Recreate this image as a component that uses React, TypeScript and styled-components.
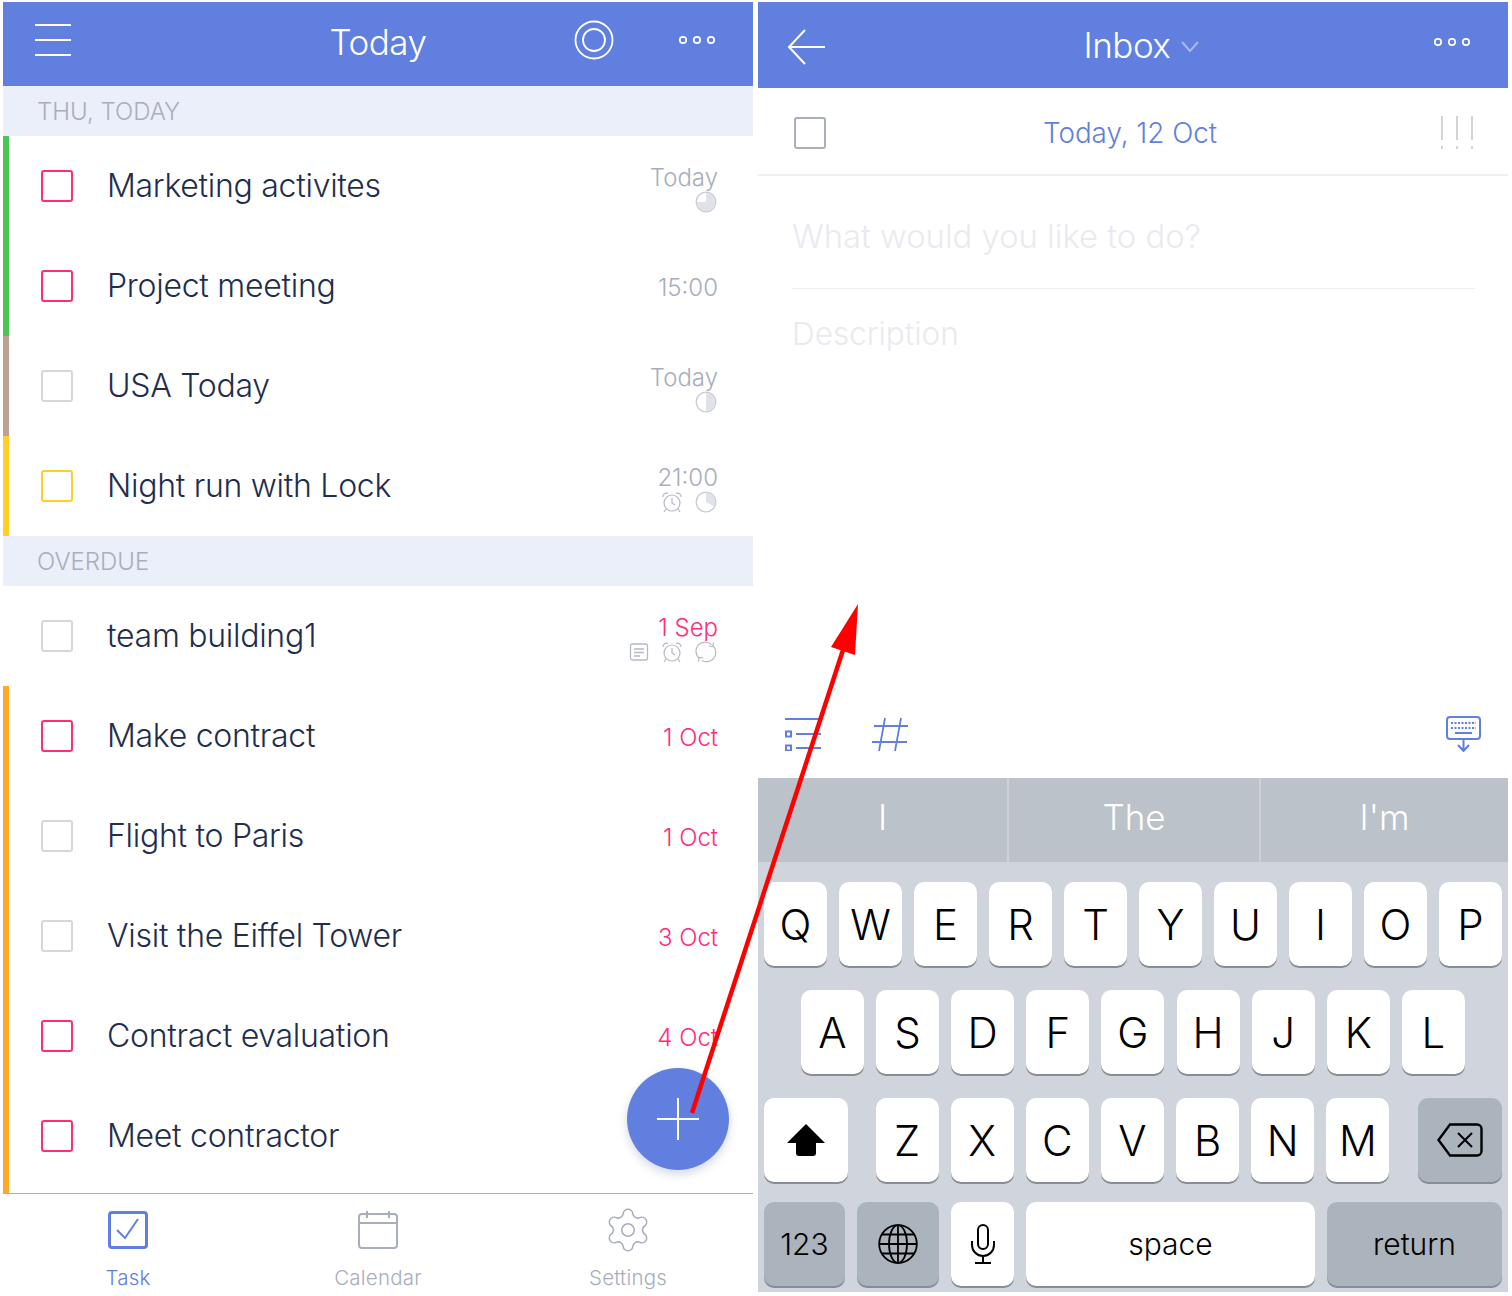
import React, { FC } from "react";
import styled, { createGlobalStyle } from "styled-components";
import { Settings } from "lucide-react";

const BLUE = "#617fdf";
const PINK = "#ff2d78";
const GREY = "#a9aebb";

const GlobalStyle = createGlobalStyle`
  html, body {
    margin: 0;
    padding: 0;
    background: #fff;
    font-family: "Inter", "Liberation Sans", sans-serif;
  }
`;

const Page = styled.div`
  position: relative;
  width: 1512px;
  height: 1296px;
  box-sizing: border-box;
  padding: 2px 4px 4px 3px;
  display: flex;
  gap: 5px;
  overflow: hidden;
`;

const Panel = styled.div`
  position: relative;
  width: 750px;
  display: flex;
  flex-direction: column;
  background: #fff;
`;

const Header = styled.header<{ $height: number }>`
  height: ${(p) => p.$height}px;
  flex: none;
  background: ${BLUE};
  display: flex;
  align-items: center;
  position: relative;
`;

const HeaderSlot = styled.div<{ $width: number; $left: number; $top?: number }>`
  width: ${(p) => p.$width}px;
  margin-left: ${(p) => p.$left}px;
  margin-top: ${(p) => p.$top ?? 0}px;
  display: flex;
  justify-content: center;
  align-items: center;
  flex: none;
`;

const Title = styled.h1`
  margin: 0;
  color: #fff;
  font-size: 35px;
  font-weight: 300;
  letter-spacing: -0.5px;
  line-height: 44px;
`;

const SectionHead = styled.div`
  height: 50px;
  flex: none;
  box-sizing: border-box;
  background: #ebeffa;
  color: ${GREY};
  font-size: 24px;
  line-height: 50px;
  padding: 1px 0 0 34px;
  font-weight: 300;
`;

const Row = styled.div<{ $bar?: string; $tail?: boolean }>`
  height: ${(p) => (p.$tail ? 107 : 100)}px;
  padding-bottom: ${(p) => (p.$tail ? 7 : 0)}px;
  box-sizing: border-box;
  flex: none;
  border-left: 6px solid ${(p) => p.$bar ?? "transparent"};
  padding-left: 32px;
  padding-right: 35px;
  display: flex;
  align-items: center;
`;

const Check = styled.span<{ $color: string }>`
  width: 32px;
  height: 32px;
  box-sizing: border-box;
  border: 2px solid ${(p) => p.$color};
  border-radius: 3px;
  flex: none;
`;

const RowTitle = styled.div`
  margin: -1px 0 0 34px;
  flex: 1;
  color: #1f2e4d;
  font-size: 32px;
  font-weight: 300;
  letter-spacing: -0.28px;
`;

const Meta = styled.div<{ $stacked?: boolean }>`
  display: flex;
  flex-direction: column;
  align-items: flex-end;
  padding-top: ${(p) => (p.$stacked ? 5 : 3)}px;
`;

const MetaText = styled.div<{ $late?: boolean }>`
  font-size: 24px;
  line-height: 26px;
  font-weight: 300;
  color: ${(p) => (p.$late ? PINK : GREY)};
`;

const MetaIcons = styled.div`
  display: flex;
  gap: 12px;
  margin: 0 1px 0 0;
  height: 22px;
  align-items: center;
`;

const Fab = styled.div`
  position: absolute;
  left: 624px;
  top: 1066px;
  width: 102px;
  height: 102px;
  border-radius: 50%;
  background: ${BLUE};
  box-shadow: 0 4px 10px rgba(97, 110, 160, 0.28);
  display: flex;
  align-items: center;
  justify-content: center;
`;

const TabBar = styled.nav`
  flex: 1;
  border-top: 1px solid #aab0bd;
  display: grid;
  grid-template-columns: repeat(3, 1fr);
`;

const Tab = styled.div<{ $active?: boolean }>`
  display: flex;
  flex-direction: column;
  align-items: center;
  padding-top: 17px;
  color: ${(p) => (p.$active ? BLUE : GREY)};
  font-size: 20.5px;
  font-weight: 300;
  letter-spacing: 0.2px;
  gap: 17px;
  line-height: 24px;
`;

const TabIcon = styled.div`
  height: 38px;
  display: flex;
  align-items: center;
  justify-content: center;
`;

const DateBar = styled.div`
  height: 88px;
  flex: none;
  box-sizing: border-box;
  border-bottom: 2px solid #eeeef3;
  padding: 3px 34px 0 36px;
  display: flex;
  align-items: center;
  justify-content: space-between;
`;

const DateLabel = styled.div`
  color: ${BLUE};
  font-size: 27.8px;
  font-weight: 300;
  margin-left: -6px;
`;

const Field = styled.div<{ $lined?: boolean; $height: number; $size: number; $pad: number }>`
  margin: 0 33px 0 34px;
  height: ${(p) => p.$height}px;
  padding-top: ${(p) => p.$pad}px;
  flex: none;
  display: flex;
  align-items: center;
  color: #e9eaef;
  font-size: ${(p) => p.$size}px;
  font-weight: 300;
  box-sizing: border-box;
  border-bottom: ${(p) => (p.$lined ? "1px solid #eeeef3" : "none")};
`;

const Tools = styled.div`
  margin-top: auto;
  height: 88px;
  flex: none;
  box-sizing: border-box;
  padding: 0 26px 0 27px;
  display: flex;
  align-items: center;
  gap: 51px;
`;

const ToolEnd = styled.span`
  margin-left: auto;
  display: flex;
`;

const Suggestions = styled.div`
  height: 84px;
  flex: none;
  background: #bbc2ca;
  display: grid;
  grid-template-columns: 251px 252px 1fr;
`;

const Suggestion = styled.div`
  color: #fff;
  font-family: "Inter", sans-serif;
  font-weight: 300;
  font-size: 35px;
  padding-bottom: 6px;
  box-sizing: border-box;
  display: flex;
  align-items: center;
  justify-content: center;
  border-right: 2px solid #ced2d8;
  &:last-child {
    border-right: none;
  }
`;

const Keyboard = styled.div`
  height: 430px;
  flex: none;
  background: #d0d4dc;
  box-sizing: border-box;
  padding: 20px 6px 0;
  display: flex;
  flex-direction: column;
  gap: 24px;
`;

const KeyRow = styled.div<{ $between?: boolean; $tight?: boolean; $inset?: number; $gap?: number }>`
  display: flex;
  gap: ${(p) => p.$gap ?? 12}px;
  justify-content: ${(p) => (p.$between ? "space-between" : "flex-start")};
  margin-top: ${(p) => (p.$tight ? -4 : 0)}px;
  padding-left: ${(p) => p.$inset ?? 0}px;
`;

const KeyGroup = styled.div`
  display: flex;
  gap: 12.17px;
  margin-left: -1px;
`;

const Key = styled.div<{ $width?: number; $dark?: boolean; $small?: boolean }>`
  width: ${(p) => p.$width ?? 63}px;
  height: 84px;
  flex: none;
  box-sizing: border-box;
  border-radius: 10px;
  background: ${(p) => (p.$dark ? "#abb3bd" : "#fff")};
  box-shadow: 0 2px 0 #888c94;
  color: #000;
  font-family: "Inter", sans-serif;
  font-weight: 300;
  font-size: ${(p) => (p.$small ? 30 : 42)}px;
  display: flex;
  align-items: center;
  justify-content: center;
`;

const ArrowLayer = styled.svg`
  position: absolute;
  left: 0;
  top: 0;
  pointer-events: none;
`;

// ---- drawings

const Pie: FC<{ slice: string }> = ({ slice }) => (
  <svg width="22" height="22" viewBox="0 0 22 22">
    <circle cx="11" cy="11" r="9.8" fill="#fff" stroke="#c6cad3" strokeWidth="1.3" />
    <path d={slice} fill="#e0e2e8" />
  </svg>
);

const Alarm: FC = () => (
  <svg width="22" height="22" viewBox="0 0 22 22" fill="none" stroke="#b4b9c4" strokeWidth="1.2">
    <circle cx="11" cy="12" r="8" />
    <path d="M11 7v5l3 2M2 6a3.600 3.600 0 0 1 5-3.600M20 6a3.600 3.600 0 0 0-5-3.600M5 18l-2 3M17 18l2 3" />
  </svg>
);

const NoteIcon: FC = () => (
  <svg width="20" height="20" viewBox="0 0 20 20" fill="none" stroke="#b4b9c4" strokeWidth="1.3">
    <rect x="1.500" y="2" width="17" height="16" rx="2" />
    <path d="M5 7h10M5 10.500h10M5 14h6" />
  </svg>
);

const RepeatIcon: FC = () => (
  <svg width="22" height="22" viewBox="0 0 22 22" fill="none" stroke="#b4b9c4" strokeWidth="1.2">
    <path d="M3.800 17A9.200 9.200 0 0 1 16.500 3.600" />
    <path d="M18.200 5A9.200 9.200 0 0 1 7 19.400" />
    <path d="M18.500 1.500L17.800 5.600 13.800 5M3.500 20.500L4.200 16.400 8.200 17" />
  </svg>
);

const Dots: FC = () => (
  <svg width="40" height="12" viewBox="0 0 40 12" fill="none" stroke="#fff" strokeWidth="1.7">
    <circle cx="5" cy="6" r="3.200" />
    <circle cx="19" cy="6" r="3.200" />
    <circle cx="33" cy="6" r="3.200" />
  </svg>
);

const Glyph = {
  hamburger: (
    <svg width="36" height="34" viewBox="0 0 36 34" stroke="#fff" strokeWidth="2">
      <path d="M0 2h36M0 17h36M0 32h36" />
    </svg>
  ),
  rings: (
    <svg width="40" height="40" viewBox="0 0 40 40" fill="none" stroke="#fff" strokeWidth="1.800">
      <circle cx="20" cy="20" r="18.500" />
      <circle cx="20" cy="20" r="11" />
    </svg>
  ),
  plus: (
    <svg width="42" height="42" viewBox="0 0 42 42" stroke="#fff" strokeWidth="2">
      <path d="M21 0v42M0 21h42" />
    </svg>
  ),
  task: (
    <svg width="40" height="38" viewBox="0 0 40 38" fill="none" stroke={BLUE}>
      <rect x="1.500" y="1.500" width="37" height="35" rx="2.500" strokeWidth="3" />
      <path d="M9 19l8 8L30 8" strokeWidth="2" />
    </svg>
  ),
  calendar: (
    <svg width="40" height="38" viewBox="0 0 40 38" fill="none" stroke={GREY} strokeWidth="2">
      <rect x="1" y="3" width="38" height="34" rx="3" />
      <path d="M1 12h38M9 0v7M31 0v7" />
    </svg>
  ),
  back: (
    <svg width="38" height="36" viewBox="0 0 38 36" fill="none" stroke="#fff" strokeWidth="2">
      <path d="M38 18H2M18 1L2 18l16 17" />
    </svg>
  ),
  chevron: (
    <svg width="20" height="12" viewBox="0 0 20 12" fill="none" stroke="#a9b8ee" strokeWidth="2">
      <path d="M2 1l8 9 8-9" />
    </svg>
  ),
  priority: (
    <svg width="34" height="34" viewBox="0 0 34 34" stroke="#d2d4da" strokeWidth="2">
      <path d="M2 0v24M17 0v24M32 0v24M2 30v3M17 30v3M32 30v3" />
    </svg>
  ),
  list: (
    <svg width="36" height="34" viewBox="0 0 36 34" fill="none" stroke={BLUE} strokeWidth="2">
      <path d="M0 2h35M11 17h25M11 31h25" />
      <rect x="1" y="14.500" width="5" height="5" />
      <rect x="1" y="28.500" width="5" height="5" />
    </svg>
  ),
  hash: (
    <svg width="36" height="36" viewBox="0 0 36 36" fill="none" stroke={BLUE} strokeWidth="1.800">
      <path d="M2 10h35M0 26h35M13 2L7 35M29 2L23 35" />
    </svg>
  ),
  keyboard: (
    <svg width="36" height="36" viewBox="0 0 36 36" fill="none" stroke={BLUE} strokeWidth="2">
      <rect x="1" y="1" width="33" height="22" rx="3" />
      <path d="M5 7h25M5 12h25" strokeDasharray="2 1.500" />
      <path d="M9 17h17M17.500 23v12M12 29l5.500 6 5.500-6" />
    </svg>
  ),
  shift: (
    <svg width="38" height="32" viewBox="0 0 38 32">
      <path d="M19 0L38 19H29V29a3 3 0 0 1-3 3H12a3 3 0 0 1-3-3V19H0z" fill="#000" />
    </svg>
  ),
  backspace: (
    <svg width="46" height="34" viewBox="0 0 46 34" fill="none" stroke="#000" strokeWidth="2.400">
      <path d="M13 1.500h27a4.500 4.500 0 0 1 4.500 4.500v22a4.500 4.500 0 0 1-4.500 4.500H13L1.500 17z" />
      <path d="M21 10l14 14M35 10L21 24" strokeWidth="2" />
    </svg>
  ),
  globe: (
    <svg width="40" height="40" viewBox="0 0 40 40" fill="none" stroke="#000" strokeWidth="1.800">
      <circle cx="20" cy="20" r="18.800" />
      <ellipse cx="20" cy="20" rx="9" ry="18.800" />
      <path d="M20 1v38M1.200 20h37.600M4 10.500h32M4 29.500h32" />
    </svg>
  ),
  mic: (
    <svg width="26" height="40" viewBox="0 0 26 40" fill="none" stroke="#000" strokeWidth="2">
      <rect x="8" y="1" width="10" height="24" rx="5" />
      <path d="M2 17v4a11 11 0 0 0 22 0v-4M13 32v6M5 39h16" />
    </svg>
  ),
};

const PIE_THREE = "M11 11V1.800A9.200 9.200 0 1 1 1.800 11z";
const PIE_HALF = "M11 1.800a9.200 9.200 0 0 1 0 18.400z";
const PIE_THIRD = "M11 11V1.800A9.200 9.200 0 0 1 19 15.600z";

const GREEN = "#4bc552";
const BROWN = "#bd9f93";
const YELLOW = "#ffcf24";
const ORANGE = "#ffa929";
const CHECK_GREY = "#d5d7dc";

const Task: FC<{
  title: string;
  bar?: string;
  check: string;
  when: string;
  late?: boolean;
  tail?: boolean;
  icons?: React.ReactNode;
}> = ({ title, bar, check, when, late, tail, icons }) => (
  <Row $bar={bar} $tail={tail}>
    <Check $color={check} />
    <RowTitle>{title}</RowTitle>
    <Meta $stacked={!!icons}>
      <MetaText $late={late}>{when}</MetaText>
      {icons && <MetaIcons>{icons}</MetaIcons>}
    </Meta>
  </Row>
);

const TOP_KEYS = ["Q", "W", "E", "R", "T", "Y", "U", "I", "O", "P"];
const MID_KEYS = ["A", "S", "D", "F", "G", "H", "J", "K", "L"];
const LOW_KEYS = ["Z", "X", "C", "V", "B", "N", "M"];

export default function App() {
  return (
    <Page>
      <GlobalStyle />
      <Panel>
        <Header $height={84}>
          <HeaderSlot $width={36} $left={32} $top={-8}>{Glyph.hamburger}</HeaderSlot>
          <HeaderSlot $width={200} $left={207} $top={-4}><Title>Today</Title></HeaderSlot>
          <HeaderSlot $width={40} $left={96} $top={-8}>{Glyph.rings}</HeaderSlot>
          <HeaderSlot $width={40} $left={64} $top={-8}><Dots /></HeaderSlot>
        </Header>
        <SectionHead>THU, TODAY</SectionHead>
        <Task title="Marketing activites" bar={GREEN} check={PINK} when="Today" icons={<Pie slice={PIE_THREE} />} />
        <Task title="Project meeting" bar={GREEN} check={PINK} when="15:00" />
        <Task title="USA Today" bar={BROWN} check={CHECK_GREY} when="Today" icons={<Pie slice={PIE_HALF} />} />
        <Task title="Night run with Lock" bar={YELLOW} check={YELLOW} when="21:00" icons={<><Alarm /><Pie slice={PIE_THIRD} /></>} />
        <SectionHead>OVERDUE</SectionHead>
        <Task title="team building1" check={CHECK_GREY} when="1 Sep" late icons={<><NoteIcon /><Alarm /><RepeatIcon /></>} />
        <Task title="Make contract" bar={ORANGE} check={PINK} when="1 Oct" late />
        <Task title="Flight to Paris" bar={ORANGE} check={CHECK_GREY} when="1 Oct" late />
        <Task title="Visit the Eiffel Tower" bar={ORANGE} check={CHECK_GREY} when="3 Oct" late />
        <Task title="Contract evaluation" bar={ORANGE} check={PINK} when="4 Oct" late />
        <Task title="Meet contractor" bar={ORANGE} check={PINK} when="" tail />
        <TabBar>
          <Tab $active><TabIcon>{Glyph.task}</TabIcon><span>Task</span></Tab>
          <Tab><TabIcon>{Glyph.calendar}</TabIcon><span>Calendar</span></Tab>
          <Tab>
            <TabIcon><Settings size={50} strokeWidth={0.75} color={GREY} /></TabIcon>
            <span>Settings</span>
          </Tab>
        </TabBar>
        <Fab>{Glyph.plus}</Fab>
      </Panel>

      <Panel>
        <Header $height={86}>
          <HeaderSlot $width={38} $left={29} $top={4}>{Glyph.back}</HeaderSlot>
          <HeaderSlot $width={200} $left={202}><Title>Inbox</Title></HeaderSlot>
          <HeaderSlot $width={20} $left={-47} $top={4}>{Glyph.chevron}</HeaderSlot>
          <HeaderSlot $width={40} $left={233} $top={-6}><Dots /></HeaderSlot>
        </Header>
        <DateBar>
          <Check $color={GREY} />
          <DateLabel>Today, 12 Oct</DateLabel>
          {Glyph.priority}
        </DateBar>
        <Field $lined $height={113} $size={32.8} $pad={7}>What would you like to do?</Field>
        <Field $height={89} $size={31.5} $pad={0}>Description</Field>
        <Tools>
          {Glyph.list}
          {Glyph.hash}
          <ToolEnd>{Glyph.keyboard}</ToolEnd>
        </Tools>
        <Suggestions>
          <Suggestion>I</Suggestion>
          <Suggestion>The</Suggestion>
          <Suggestion>I'm</Suggestion>
        </Suggestions>
        <Keyboard>
          <KeyRow>{TOP_KEYS.map((k) => <Key key={k}>{k}</Key>)}</KeyRow>
          <KeyRow $inset={37} $gap={12.12}>{MID_KEYS.map((k) => <Key key={k}>{k}</Key>)}</KeyRow>
          <KeyRow $between>
            <Key $width={84}>{Glyph.shift}</Key>
            <KeyGroup>{LOW_KEYS.map((k) => <Key key={k}>{k}</Key>)}</KeyGroup>
            <Key $width={84} $dark>{Glyph.backspace}</Key>
          </KeyRow>
          <KeyRow $tight>
            <Key $width={81} $dark $small>123</Key>
            <Key $width={82} $dark>{Glyph.globe}</Key>
            <Key>{Glyph.mic}</Key>
            <Key $width={289} $small>space</Key>
            <Key $width={175} $dark $small>return</Key>
          </KeyRow>
        </Keyboard>
      </Panel>

      <ArrowLayer width="1512" height="1296" viewBox="0 0 1512 1296">
        <path d="M692 1113L843 650" stroke="#ff0000" strokeWidth="4.500" fill="none" />
        <path d="M858 604L855 655L831 647z" fill="#ff0000" />
      </ArrowLayer>
    </Page>
  );
}
